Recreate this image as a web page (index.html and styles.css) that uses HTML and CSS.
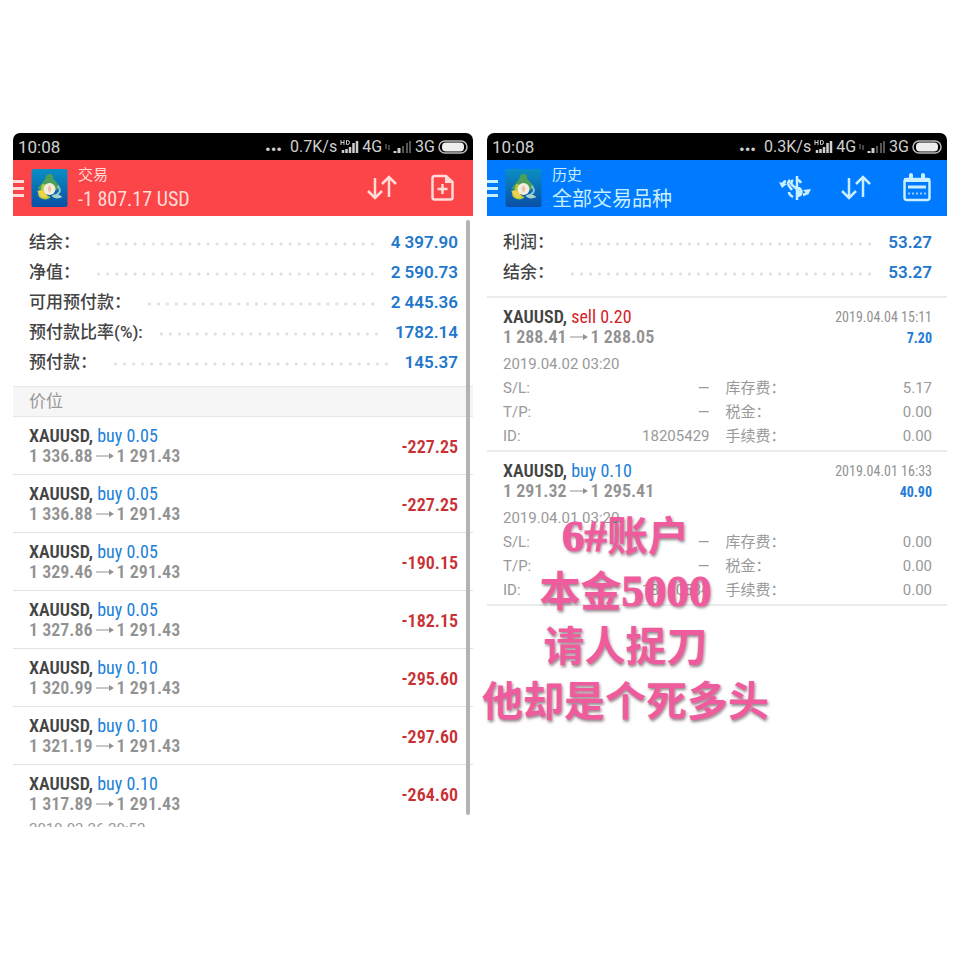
FILE: index.html
```html
<!DOCTYPE html>
<html lang="zh-CN">
<head>
    <meta charset="UTF-8">
    <meta name="viewport" content="width=device-width, initial-scale=1.0">
    <title>交易 / 历史</title>
    <link rel="stylesheet" href="styles.css">
</head>
<body>
    <!-- shared icons -->
    <svg class="sprite" aria-hidden="true">
        <defs>
            <linearGradient id="logo-bg" x1="0" y1="0" x2="0" y2="1">
                <stop offset="0" stop-color="#0a8fc4"/>
                <stop offset="1" stop-color="#0a4fa6"/>
            </linearGradient>
        </defs>
        <symbol id="logo" viewBox="0 0 36 38">
            <rect width="36" height="38" rx="2" fill="url(#logo-bg)"/>
            <path d="M18 5c3 0 4 2 3.500 4.500l7 8-4 4-6.500-7-7 7-5-2 7.500-9C14 7 15.500 5 18 5z" fill="#4c9f58"/>
            <path d="M11 15c3 0 5 2 4 6l-2 4 6 3c-2 3-7 3-10 1-3-2-3-4 0-6 1-3 0-6 2-8z" fill="#b4c63a"/>
            <path d="M6 22c4-2 9 1 10 6-4 2-8 1-10-6z" fill="#ead34a"/>
            <path d="M26 17c2 2 3 4 2 6l-3 3" fill="none" stroke="#8cc9cf" stroke-width="2"/>
            <path d="M20 27c3-3 8-2 11 1-4 2-8 2-11-1z" fill="#a9d3c8"/>
            <circle cx="18" cy="20" r="6" fill="#f4ecdc"/>
            <path d="M18 16l2 4-2 4-2-4z" fill="#e8c3a6"/>
        </symbol>
        <symbol id="sort" viewBox="0 0 30 26">
            <path d="M8 3v20M1 16l7 7 7-7M22 22V2M15 9l7-7 7 7" fill="none" stroke="currentColor" stroke-width="2.500"/>
        </symbol>
        <symbol id="signal-full" viewBox="0 0 19 14">
            <path d="M1 0v5M4 0v5M1 2.500h3M6.500 .5v4h1q2 0 2-2t-2-2z" fill="none" stroke="currentColor" stroke-width="1"/>
            <path d="M3 13v-3M6.500 13V9M10 13V7M13.500 13V3M17 13V1" stroke="currentColor" stroke-width="2.500"/>
        </symbol>
        <symbol id="signal-weak" viewBox="0 0 19 14">
            <path d="M2 13v-2M6 13V8" stroke="currentColor" stroke-width="3"/>
            <path d="M10 13V6M14 13V3M17 13V1" stroke="#555" stroke-width="2"/>
        </symbol>
        <symbol id="updown" viewBox="0 0 5 6">
            <path d="M1 0v5M4 1v5" stroke="#888" stroke-width="1"/>
        </symbol>
        <symbol id="battery" viewBox="0 0 30 14">
            <rect x="1" y="1" width="28" height="12" rx="6" fill="none" stroke="#bbb" stroke-width="1.500"/>
            <rect x="4" y="2.500" width="22" height="9" rx="4" fill="#eee"/>
        </symbol>
        <symbol id="arrow" viewBox="0 0 18 10">
            <path d="M0 5h16" stroke="currentColor" stroke-width="1"/>
            <path d="M13 2l5 3-5 3z" fill="currentColor"/>
        </symbol>
    </svg>

    <main class="screens">
        <section class="phone">
            <div class="status">
                <span class="time">10:08</span>
                <span class="more">•••</span>
                <span class="speed">0.7K/s</span>
                <svg class="signal"><use href="#signal-full"/></svg>
                <span>4G</span>
                <svg class="updown"><use href="#updown"/></svg>
                <svg class="signal"><use href="#signal-weak"/></svg>
                <span>3G</span>
                <svg class="battery"><use href="#battery"/></svg>
            </div>
            <header class="bar red">
                <button class="menu" aria-label="菜单"><i></i><i></i><i></i></button>
                <svg class="logo"><use href="#logo"/></svg>
                <div class="titles">
                    <h1>交易</h1>
                    <p class="narrow">-1 807.17 USD</p>
                </div>
                <button class="action" aria-label="排序"><svg class="icon-sort"><use href="#sort"/></svg></button>
                <button class="action" aria-label="新订单">
                    <svg class="icon-doc" viewBox="0 0 24 28">
                        <path d="M3.500 2H15l6.500 6v15.500a2 2 0 0 1-2 2h-16a2 2 0 0 1-2-2V4a2 2 0 0 1 2-2z" fill="none" stroke="currentColor" stroke-width="2.500"/>
                        <path d="M14 2v7h7z" fill="currentColor"/>
                        <path d="M11.500 10v10M6.500 15h10" stroke="currentColor" stroke-width="2.500"/>
                    </svg>
                </button>
            </header>
            <dl class="summary">
                <div><dt>结余：</dt><dd>4 397.90</dd></div>
                <div><dt>净值：</dt><dd>2 590.73</dd></div>
                <div><dt>可用预付款：</dt><dd>2 445.36</dd></div>
                <div><dt>预付款比率(%):</dt><dd>1782.14</dd></div>
                <div><dt>预付款：</dt><dd>145.37</dd></div>
            </dl>
            <h2 class="section">价位</h2>
            <ul class="positions">
                <li>
                    <div class="deal narrow"><p><b>XAUUSD,</b> <span class="buy">buy 0.05</span></p><p class="price">1 336.88<svg><use href="#arrow"/></svg>1 291.43</p></div>
                    <strong class="loss narrow">-227.25</strong>
                </li>
                <li>
                    <div class="deal narrow"><p><b>XAUUSD,</b> <span class="buy">buy 0.05</span></p><p class="price">1 336.88<svg><use href="#arrow"/></svg>1 291.43</p></div>
                    <strong class="loss narrow">-227.25</strong>
                </li>
                <li>
                    <div class="deal narrow"><p><b>XAUUSD,</b> <span class="buy">buy 0.05</span></p><p class="price">1 329.46<svg><use href="#arrow"/></svg>1 291.43</p></div>
                    <strong class="loss narrow">-190.15</strong>
                </li>
                <li>
                    <div class="deal narrow"><p><b>XAUUSD,</b> <span class="buy">buy 0.05</span></p><p class="price">1 327.86<svg><use href="#arrow"/></svg>1 291.43</p></div>
                    <strong class="loss narrow">-182.15</strong>
                </li>
                <li>
                    <div class="deal narrow"><p><b>XAUUSD,</b> <span class="buy">buy 0.10</span></p><p class="price">1 320.99<svg><use href="#arrow"/></svg>1 291.43</p></div>
                    <strong class="loss narrow">-295.60</strong>
                </li>
                <li>
                    <div class="deal narrow"><p><b>XAUUSD,</b> <span class="buy">buy 0.10</span></p><p class="price">1 321.19<svg><use href="#arrow"/></svg>1 291.43</p></div>
                    <strong class="loss narrow">-297.60</strong>
                </li>
                <li>
                    <div class="deal narrow"><p><b>XAUUSD,</b> <span class="buy">buy 0.10</span></p><p class="price">1 317.89<svg><use href="#arrow"/></svg>1 291.43</p></div>
                    <strong class="loss narrow">-264.60</strong>
                    <p class="date">2019.03.26 20:52</p>
                </li>
            </ul>
            <div class="scrollbar"></div>
        </section>

        <section class="phone">
            <div class="status">
                <span class="time">10:08</span>
                <span class="more">•••</span>
                <span class="speed">0.3K/s</span>
                <svg class="signal"><use href="#signal-full"/></svg>
                <span>4G</span>
                <svg class="updown"><use href="#updown"/></svg>
                <svg class="signal"><use href="#signal-weak"/></svg>
                <span>3G</span>
                <svg class="battery"><use href="#battery"/></svg>
            </div>
            <header class="bar blue">
                <button class="menu" aria-label="菜单"><i></i><i></i><i></i></button>
                <svg class="logo"><use href="#logo"/></svg>
                <div class="titles">
                    <h1>历史</h1>
                    <p>全部交易品种</p>
                </div>
                <button class="action" aria-label="品种">
                    <svg class="icon-currency" viewBox="0 0 32 26">
                        <path d="M22 8q-1-3-4-3M14 5q-3 2-1 5l6 5q3 4-1 6M18 1v24M18 12q6 2 4 7-1 2-4 2" fill="none" stroke="currentColor" stroke-width="2.500"/>
                        <path d="M7 6Q4 7 3 11M11 5q-3 3-1 6l3 4M10 17q0 3 4 5M24 20q4-1 5-4" fill="none" stroke="currentColor" stroke-width="2.500"/>
                        <path d="M0 7l3 6 5-4zM24 15l8-1-3 6z" fill="currentColor"/>
                    </svg>
                </button>
                <button class="action" aria-label="排序"><svg class="icon-sort"><use href="#sort"/></svg></button>
                <button class="action" aria-label="日期">
                    <svg class="icon-calendar" viewBox="0 0 28 30">
                        <rect x="1.500" y="6" width="25" height="21" rx="2.500" fill="none" stroke="currentColor" stroke-width="2.500"/>
                        <path d="M1 7h26" stroke="currentColor" stroke-width="4"/>
                        <path d="M8 2v4M20 2v4" stroke="currentColor" stroke-width="4" stroke-linecap="round"/>
                        <path d="M5 14h18" stroke="currentColor" stroke-width="3"/>
                        <path d="M5 20.500h18" stroke="currentColor" stroke-width="2" stroke-dasharray="2 2" opacity=".7"/>
                    </svg>
                </button>
            </header>
            <dl class="summary">
                <div><dt>利润：</dt><dd>53.27</dd></div>
                <div><dt>结余：</dt><dd>53.27</dd></div>
            </dl>
            <ul class="history">
                <li>
                    <div class="deal narrow"><p><b>XAUUSD,</b> <span class="sell">sell 0.20</span></p><p class="price">1 288.41<svg><use href="#arrow"/></svg>1 288.05</p></div>
                    <div class="closed narrow"><p>2019.04.04 15:11</p><strong>7.20</strong></div>
                    <p class="date">2019.04.02 03:20</p>
                    <dl class="details">
                        <div><dt>S/L:</dt><dd>—</dd></div><div><dt>库存费：</dt><dd>5.17</dd></div>
                        <div><dt>T/P:</dt><dd>—</dd></div><div><dt>税金：</dt><dd>0.00</dd></div>
                        <div><dt>ID:</dt><dd>18205429</dd></div><div><dt>手续费：</dt><dd>0.00</dd></div>
                    </dl>
                </li>
                <li>
                    <div class="deal narrow"><p><b>XAUUSD,</b> <span class="buy">buy 0.10</span></p><p class="price">1 291.32<svg><use href="#arrow"/></svg>1 295.41</p></div>
                    <div class="closed narrow"><p>2019.04.01 16:33</p><strong>40.90</strong></div>
                    <p class="date">2019.04.01 03:20</p>
                    <dl class="details">
                        <div><dt>S/L:</dt><dd>—</dd></div><div><dt>库存费：</dt><dd>0.00</dd></div>
                        <div><dt>T/P:</dt><dd>—</dd></div><div><dt>税金：</dt><dd>0.00</dd></div>
                        <div><dt>ID:</dt><dd>18180534</dd></div><div><dt>手续费：</dt><dd>0.00</dd></div>
                    </dl>
                </li>
            </ul>
        </section>
        <p class="caption"><span>6#</span>账户<br>本金<span>5000</span><br>请人捉刀<br>他却是个死多头</p>
    </main>
</body>
</html>
```
FILE: styles.css
```css
* {
    box-sizing: border-box;
}
body {
    margin: 0;
    background-color: #ffffff;
    color: #444444;
    font-family: Roboto, "Noto Sans CJK SC", sans-serif;
    font-size: 15px;
}
h1, h2, p, dl, dd, ul {
    margin: 0;
    padding: 0;
}
ul {
    list-style: none;
}
button {
    border: 0;
    padding: 0;
    background: none;
    color: inherit;
}
.sprite {
    position: absolute;
    width: 0;
    height: 0;
}
.screens {
    position: relative;
    display: grid;
    grid-template-columns: 1fr 1fr;
    gap: 14px;
    height: 100vh;
    min-height: 600px;
    padding: 133px 13px;
}
.phone {
    position: relative;
    min-height: 0;
    overflow: hidden;
    border-radius: 7px 7px 0 0;
}
.narrow {
    font-family: "Roboto Condensed", "Liberation Sans Narrow", Roboto, "Noto Sans CJK SC", sans-serif;
}

/* status bar */
.status {
    display: flex;
    align-items: center;
    gap: 3px;
    height: 27px;
    padding: 0 5px;
    background-color: #000000;
    color: #d0d0d0;
    font-size: 16px;
    white-space: nowrap;
}
.time {
    margin-right: auto;
    font-size: 17px;
}
.more {
    margin-right: 5px;
    font-size: 17px;
    line-height: 17px;
    padding-top: 5px;
}
.signal {
    width: 19px;
    height: 14px;
}
.updown {
    width: 5px;
    height: 6px;
}
.battery {
    width: 30px;
    height: 14px;
}

/* title bar */
.bar {
    display: flex;
    align-items: center;
    height: 56px;
    color: #ffdcd8;
}
.red {
    background-color: #fc4548;
}
.blue {
    background-color: #007aff;
    color: #c8efff;
}
.menu {
    display: flex;
    flex-direction: column;
    gap: 4px;
    width: 11px;
}
.menu i {
    height: 3px;
    background-color: currentColor;
}
.logo {
    width: 37px;
    height: 38px;
    margin: 0 10px 0 7px;
}
.titles {
    flex: 1;
}
.titles h1 {
    font-size: 15px;
    font-weight: 400;
    line-height: 22px;
}
.titles p {
    font-size: 20px;
    line-height: 26px;
}
.action {
    display: flex;
    justify-content: center;
    width: 61px;
}
.icon-sort {
    width: 30px;
    height: 26px;
}
.icon-doc {
    width: 24px;
    height: 28px;
}
.icon-currency {
    width: 32px;
    height: 26px;
}
.icon-calendar {
    width: 28px;
    height: 30px;
}

/* account totals with dot leaders */
.summary {
    padding: 11px 15px 9px 16px;
    font-size: 17px;
    line-height: 30px;
}
.summary div {
    display: flex;
    height: 30px;
}
.summary div::after {
    content: "";
    order: 1;
    flex: 1;
    margin: 4px 14px 0;
    background: radial-gradient(circle, #dedede 1px, transparent 2px) 0 50% / 9px 8px;
    background-repeat: round no-repeat;
}
.summary dt {
    font-weight: 500;
}
.summary dd {
    order: 2;
    color: #2277cc;
    font-weight: 600;
}
.section {
    padding: 0 16px;
    border: solid #e6e6e6;
    border-width: 1px 0;
    background-color: #f6f6f7;
    color: #999999;
    font-size: 17px;
    font-weight: 400;
    line-height: 29px;
}

/* deals */
.positions li {
    display: flex;
    flex-wrap: wrap;
    align-items: center;
    justify-content: space-between;
    padding: 9px 15px 8px 16px;
    border-bottom: 1px solid #e2e2e2;
}
.deal {
    font-size: 18px;
    line-height: 20px;
    white-space: nowrap;
}
.deal b {
    font-weight: 600;
}
.price {
    display: flex;
    align-items: center;
    color: #929292;
    font-weight: 600;
}
.price svg {
    width: 18px;
    height: 10px;
    margin: 0 3px;
}
.buy {
    color: #2080d8;
}
.sell {
    color: #d62028;
}
.loss {
    color: #c93034;
    font-size: 18px;
    font-weight: 600;
}
.date {
    width: 100%;
    margin-top: 3px;
    color: #999999;
    line-height: 24px;
}
.scrollbar {
    position: absolute;
    top: 87px;
    right: 3px;
    bottom: 12px;
    width: 4px;
    border-radius: 2px;
    background-color: #b3b3b3;
}
.history {
    border-top: 2px solid #e9ecec;
}
.history li {
    display: grid;
    grid-template-columns: 1fr auto;
    padding: 9px 15px 2px 16px;
    border-bottom: 2px solid #e9ecec;
}
.closed {
    color: #929292;
    font-size: 14px;
    line-height: 21px;
    text-align: right;
}
.closed strong {
    color: #1e7bd8;
}
.history .date,
.details {
    grid-column: 1 / -1;
}
.details {
    display: grid;
    grid-template-columns: 1fr 1fr;
    column-gap: 16px;
    color: #999999;
    line-height: 24px;
}
.details div {
    display: flex;
    justify-content: space-between;
    height: 24px;
}

/* text laid over both screens */
.caption {
    position: absolute;
    top: 506px;
    left: 482px;
    color: #ee5c9e;
    font-family: "Noto Sans CJK SC", sans-serif;
    font-size: 41px;
    font-weight: 700;
    line-height: 55px;
    text-align: center;
    text-shadow: 1px 2px 3px rgba(80, 50, 65, 0.6);
    white-space: nowrap;
}
.caption span {
    font-family: "Liberation Serif", serif;
    font-size: 45px;
    line-height: 45px;
    -webkit-text-stroke: 1px #ee5c9e;
}
```
